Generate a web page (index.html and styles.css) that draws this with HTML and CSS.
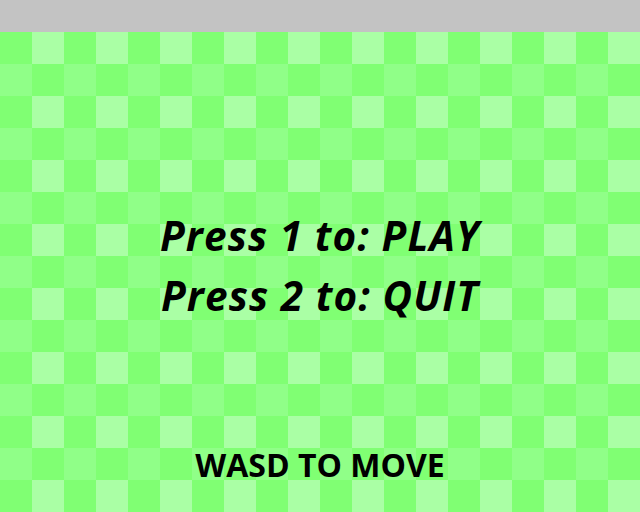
FILE: index.html
```html
<!DOCTYPE html>
<html>
<head>
<meta charset="utf-8">
<link rel="stylesheet" href="styles.css">
</head>
<body>
<div class="topbar"></div>
<main class="board">
  <div class="menu">
    <p class="option">Press 1 to: PLAY</p>
    <p class="option">Press 2 to: QUIT</p>
  </div>
  <p class="hint">WASD TO MOVE</p>
</main>
</body>
</html>
```
FILE: styles.css
```css
html, body {
  margin: 0;
  padding: 0;
}
body {
  width: 640px;
  height: 512px;
  overflow: hidden;
  font-family: "Open Sans", "Noto Sans", sans-serif;
  color: #000;
}
.topbar {
  height: 32px;
  background: #c3c3c3;
}
.board {
  height: 480px;
  display: flex;
  flex-direction: column;
  align-items: center;
  background-image: conic-gradient(#aaffa5 0 25%, #80ff73 0 50%, #90ff88 0 75%, #80ff73 0);
  background-size: 64px 64px;
  background-position: 0 0;
}
.menu {
  margin-top: 174px;
  display: flex;
  flex-direction: column;
  align-items: center;
}
.option {
  margin: 0;
  font-size: 40.5px;
  line-height: 60px;
  letter-spacing: 1.1px;
  font-weight: 700;
  font-style: italic;
}
.hint {
  margin: 119px 0 0;
  font-size: 32px;
  line-height: 40px;
  font-weight: 700;
}
```
